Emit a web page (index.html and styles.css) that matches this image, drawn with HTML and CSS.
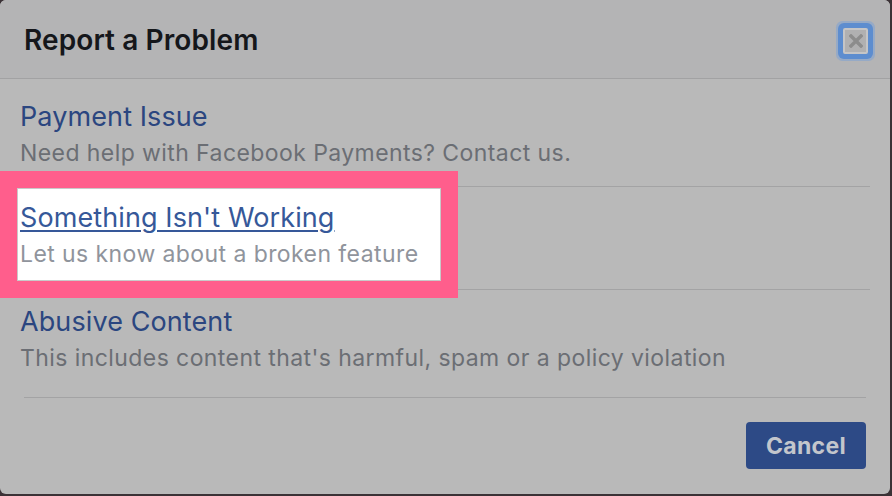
FILE: index.html
```html
<!DOCTYPE html>
<html lang="en">

<head>
    <meta charset="UTF-8">
    <meta name="viewport" content="width=device-width, initial-scale=1.0">
    <title>Report a Problem</title>
    <link rel="stylesheet" href="styles.css">
</head>

<body>

    <!-- Dialog -->
    <div class="dialog">
        <div class="dialog-header">
            <h2>Report a Problem</h2>
            <button class="close-btn" aria-label="Close">
                <svg width="14" height="14" viewBox="0 0 14 14">
                    <path d="M2 2 L12 12 M12 2 L2 12" stroke="#8c8c8c" stroke-width="3.4" stroke-linecap="square" />
                </svg>
            </button>
        </div>

        <!-- Options -->
        <div class="options">
            <div class="option option-first">
                <a href="#" class="option-title">Payment Issue</a>
                <p class="option-desc">Need help with Facebook Payments? Contact us.</p>
            </div>

            <div class="option option-marked">
                <div class="marked-box">
                    <a href="#" class="option-title">Something Isn't Working</a>
                    <p class="option-desc">Let us know about a broken feature</p>
                </div>
            </div>

            <div class="option option-last">
                <a href="#" class="option-title">Abusive Content</a>
                <p class="option-desc">This includes content that's harmful, spam or a policy violation</p>
            </div>
        </div>

        <!-- Footer -->
        <div class="dialog-footer">
            <button class="cancel-btn">Cancel</button>
        </div>
    </div>

</body>

</html>
```

FILE: styles.css
```css
/* Reset */
* {
    margin: 0;
    padding: 0;
    box-sizing: border-box;
}

body {
    font-family: Inter, "Liberation Sans", Arial, sans-serif;
    background-color: #3b3236;
    width: 892px;
    height: 496px;
    overflow: hidden;
}

/* Dialog */
.dialog {
    width: 890px;
    height: 494px;
    background-color: #b9b9b9;
    border-radius: 6px;
    overflow: hidden;
    display: flex;
    flex-direction: column;
}

.dialog-header {
    height: 79px;
    background-color: #b4b4b5;
    border-bottom: 1px solid #a2a2a3;
    display: flex;
    justify-content: space-between;
    align-items: center;
    padding: 0 22px 0 24px;
}

.dialog-header h2 {
    font-size: 28px;
    font-weight: 600;
    color: #15171b;
    line-height: 34px;
    letter-spacing: 0.1px;
    margin-top: 2px;
}

.close-btn {
    width: 25px;
    height: 26px;
    margin-top: 3px;
    border: 2px solid #c5c5c6;
    border-radius: 2px;
    background-color: #b0b0b1;
    box-shadow: 0 0 0 5px #5d8dcf, 0 0 0 7px rgba(120, 160, 215, 0.5);
    display: flex;
    justify-content: center;
    align-items: center;
    cursor: pointer;
}

/* Options */
.option {
    position: relative;
    padding: 0 20px;
}

.option::after {
    content: '';
    position: absolute;
    left: 24px;
    right: 20px;
    bottom: 0;
    height: 1px;
    background-color: #a3a3a4;
}

.option-first {
    padding-top: 21px;
    padding-bottom: 19px;
}

.option-marked {
    padding: 1px 0 9px 17px;
}

.option-last {
    padding-top: 15px;
    padding-bottom: 24px;
}

.option-last::after {
    display: none;
}

.option-title {
    display: block;
    font-size: 27px;
    line-height: 34px;
    color: #2b4680;
    text-decoration: none;
    margin-bottom: 5px;
    letter-spacing: 0.1px;
}

.option-desc {
    font-size: 23px;
    line-height: 29px;
    color: #6b6e74;
    letter-spacing: 0.42px;
}

/* Highlighted option */
.marked-box {
    position: relative;
    z-index: 1;
    width: 424px;
    background-color: #fff;
    border: 1px solid #c9c9c9;
    padding: 12px 0 11px 2px;
    box-shadow: 0 0 0 17px #ff5e8c;
}

.marked-box .option-title {
    color: #365899;
    text-decoration: underline;
    text-decoration-thickness: 2px;
    text-underline-offset: 3px;
}

.marked-box .option-desc {
    color: #90949c;
}

/* Footer */
.dialog-footer {
    margin: 0 24px;
    border-top: 1px solid #a3a3a4;
    padding-top: 24px;
    display: flex;
    justify-content: flex-end;
}

.cancel-btn {
    width: 120px;
    height: 47px;
    background-color: #2d4a86;
    color: #c3c6cc;
    border: none;
    border-radius: 4px;
    font-family: Inter, "Liberation Sans", Arial, sans-serif;
    font-size: 23px;
    font-weight: 700;
    letter-spacing: 0.3px;
    cursor: pointer;
}
```
